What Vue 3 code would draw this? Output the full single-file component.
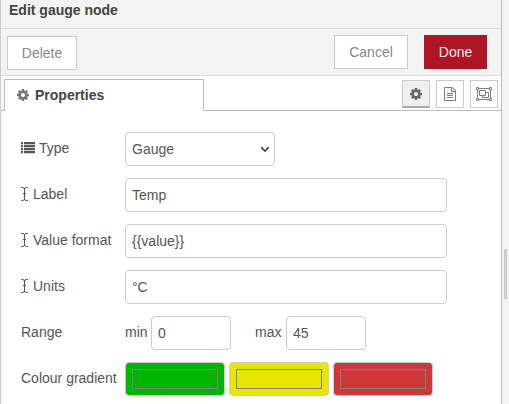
<script setup>
import { ref } from 'vue'

const type = ref('Gauge')
const fields = ref([
  { label: 'Label', value: 'Temp' },
  { label: 'Value format', value: '{{value}}' },
  { label: 'Units', value: '°C' },
])
const min = ref('0')
const max = ref('45')
const colours = ['#00b500', '#e6e600', '#ca3838']
const cog =
  'M1152 896q0-106-75-181t-181-75-181 75-75 181 75 181 181 75 181-75 75-181zm512-109v222q0 12-8 23t-20 13l-185 28q-19 54-39 91 35 50 107 138 10 12 10 25t-9 23q-27 37-99 108t-94 71q-12 0-26-9l-138-108q-44 23-91 38-16 136-29 186-7 28-36 28h-222q-14 0-24.5-8.5t-11.5-21.5l-28-184q-49-16-90-37l-141 107q-10 9-25 9-14 0-25-11-126-114-165-168-7-10-7-23 0-12 8-23 15-21 51-66.5t54-70.5q-27-50-41-99l-183-27q-13-2-21-12.5t-8-23.5v-222q0-12 8-23t19-13l186-28q14-46 39-92-40-57-107-138-10-12-10-24 0-10 9-23 26-36 98.5-107.5t94.5-71.5q13 0 26 10l138 107q44-23 91-38 16-136 29-186 7-28 36-28h222q14 0 24.5 8.5t11.5 21.5l28 184q49 16 90 37l142-107q9-9 24-9 13 0 25 10 129 119 165 170 7 8 7 22 0 12-8 23-15 21-51 66.5t-54 70.5q26 50 41 98l183 28q13 2 21 12.5t8 23.5z'
</script>

<template>
  <div class="editor">
    <main class="tray">
      <header class="title">Edit gauge node</header>
      <div class="toolbar">
        <button class="btn delete">Delete</button>
        <button class="btn cancel">Cancel</button>
        <button class="btn done">Done</button>
      </div>
      <nav class="tabs">
        <div class="tab">
          <svg width="14" height="14" viewBox="0 0 1792 1792"><path :d="cog" /></svg>
          <span>Properties</span>
        </div>
        <div class="tab-line">
          <button class="tab-btn selected">
            <svg width="14" height="14" viewBox="0 0 1792 1792"><path :d="cog" /></svg>
          </button>
          <button class="tab-btn">
            <svg width="14" height="14" viewBox="0 0 1792 1792">
              <path d="M1596 380q28 28 48 76t20 88v1152q0 40-28 68t-68 28h-1344q-40 0-68-28t-28-68v-1600q0-40 28-68t68-28h896q40 0 88 20t76 48zm-444-244v376h376q-10-29-22-41l-313-313q-12-12-41-22zm384 1528v-1024h-416q-40 0-68-28t-28-68v-416h-768v1536h1280zm-1024-864q0-14 9-23t23-9h704q14 0 23 9t9 23v64q0 14-9 23t-23 9h-704q-14 0-23-9t-9-23v-64zm736 224q14 0 23 9t9 23v64q0 14-9 23t-23 9h-704q-14 0-23-9t-9-23v-64q0-14 9-23t23-9h704zm0 256q14 0 23 9t9 23v64q0 14-9 23t-23 9h-704q-14 0-23-9t-9-23v-64q0-14 9-23t23-9h704z" />
            </svg>
          </button>
          <button class="tab-btn">
            <svg class="outline" width="16" height="14" viewBox="0 0 16 14">
              <path d="M.5 .5h2v2h-2zM13.5 .5h2v2h-2zM.5 11.5h2v2h-2zM13.5 11.5h2v2h-2zM3 1.5h10M3 12.5h10M1.5 3v8M14.5 3v8M3.5 3.5h6v5h-6zM10 5.5h2.500v5h-6v-2" />
            </svg>
          </button>
        </div>
      </nav>
      <form class="form" @submit.prevent>
        <div class="row">
          <label class="label">
            <svg class="list" width="14" height="14" viewBox="0 0 14 14">
              <path d="M0 1h2v2.200H0zM3 1h11v2.200H3zM0 4h2v2.200H0zM3 4h11v2.200H3zM0 7h2v2.200H0zM3 7h11v2.200H3zM0 10h2v2.200H0zM3 10h11v2.200H3z" />
            </svg>
            <span>Type</span>
          </label>
          <div class="select">
            <span>{{ type }}</span>
            <svg class="chevron" width="10" height="8" viewBox="0 0 10 8"><path d="M1.200 2.200L5 6L8.800 2.200" /></svg>
          </div>
        </div>
        <div v-for="field in fields" :key="field.label" class="row">
          <label class="label">
            <svg class="cursor" width="8" height="14" viewBox="0 0 8 14">
              <path d="M0 .5h1.500Q3.500 .5 3.500 2v10q0 1.500-2 1.500H0M7 .5H5.500q-2 0-2 1.500v10q0 1.500 2 1.500H7M2 6.500h3" />
            </svg>
            <span>{{ field.label }}</span>
          </label>
          <input v-model="field.value" class="input" type="text" />
        </div>
        <div class="row">
          <label class="label">Range</label>
          <span class="unit min">min</span>
          <input v-model="min" class="input short" type="text" />
          <span class="unit max">max</span>
          <input v-model="max" class="input short" type="text" />
        </div>
        <div class="row">
          <label class="label">Colour gradient</label>
          <div class="swatches">
            <div v-for="c in colours" :key="c" class="swatch" :style="{ background: c }"><i></i></div>
          </div>
        </div>
      </form>
    </main>
    <aside class="gutter"><div class="thumb"></div></aside>
  </div>
</template>

<style>
body { margin: 0; overflow: hidden; }
</style>

<style scoped>
* { box-sizing: border-box; }
.editor {
  display: flex;
  width: 509px;
  height: 404px;
  overflow: hidden;
  font: 14px/20px "Liberation Sans", Arial, sans-serif;
  color: #555;
}
.tray {
  width: 502px;
  flex: none;
  border-left: 1px solid #ccc;
  border-right: 1px solid #bbb;
  background: linear-gradient(to right, #f6f6f6, #fff 4px);
}
svg { display: block; flex: none; fill: currentColor; }
button { font: inherit; margin: 0; }
.title {
  height: 29px;
  padding-left: 8px;
  border-bottom: 1px solid #ddd;
  background: #f3f3f3;
  color: #444;
  font-weight: bold;
}
.toolbar {
  display: flex;
  align-items: flex-start;
  height: 47px;
  padding: 6px 14px 0 6px;
  border-bottom: 1px solid #ddd;
  background: #f3f3f3;
}
.btn {
  height: 34px;
  padding: 0;
  border: 1px solid #ccc;
  border-radius: 0;
  background: #fff;
  color: #888;
}
.delete { width: 70px; margin: 1px auto 0 0; }
.cancel { width: 74px; margin-right: 16px; }
.done { width: 63px; border-color: #ad1625; background: #ad1625; color: #eee; }
.tabs {
  display: flex;
  height: 35px;
  padding-top: 3px;
  background: linear-gradient(#bbb, #bbb) left bottom / 3px 1px no-repeat;
}
.tab {
  display: flex;
  align-items: flex-start;
  gap: 5px;
  width: 200px;
  margin-left: 3px;
  padding: 5px 0 0 11px;
  border: solid #bbb;
  border-width: 1px 1px 0;
  color: #444;
  font-weight: bold;
}
.tab svg { color: #777; margin-top: 3px; }
.tab-line {
  display: flex;
  flex: 1;
  justify-content: flex-end;
  gap: 6px;
  padding: 1px 3px 0 0;
  border-bottom: 1px solid #bbb;
}
.tab-btn {
  display: flex;
  align-items: center;
  justify-content: center;
  width: 28px;
  height: 28px;
  padding: 0;
  border: 1px solid #ccc;
  background: #fff;
  color: #808080;
}
.tab-btn.selected {
  border-bottom: 2px solid #aaa;
  padding-top: 1px;
  background: #efefef;
  color: #666;
}
.outline { fill: none; stroke: currentColor; }
.form { display: flex; flex-direction: column; gap: 12px; padding: 21px 0 0 20px; }
.row { display: flex; align-items: center; height: 34px; }
.label {
  display: flex;
  align-items: center;
  width: 104px;
  padding-bottom: 2px;
  white-space: nowrap;
}
.list { margin-right: 4px; }
.cursor { margin-right: 4px; fill: none; stroke: currentColor; }
.input, .select {
  width: 322px;
  height: 34px;
  margin: 0;
  padding: 6px;
  border: 1px solid #ccc;
  border-radius: 4px;
  background: #fff;
  color: #555;
  font: inherit;
  outline: none;
}
.select {
  display: flex;
  align-items: center;
  justify-content: space-between;
  width: 150px;
  padding-right: 4px;
}
.chevron { fill: none; stroke: #444; stroke-width: 1.7; }
.short { width: 80px; }
.unit { padding-bottom: 2px; }
.min { width: 26px; }
.max { width: 31px; margin-left: 24px; }
.swatches { display: flex; gap: 4px; }
.swatch {
  display: flex;
  width: 100px;
  height: 34px;
  padding: 6px;
  border: 1px solid #ccc;
  border-radius: 4px;
}
.swatch i { flex: 1; border: 1px solid #808080; }
.gutter { flex: 1; padding: 249px 0 0 2px; background: #f3f3f3; }
.thumb { width: 3px; height: 50px; background: #ccc; }
</style>
